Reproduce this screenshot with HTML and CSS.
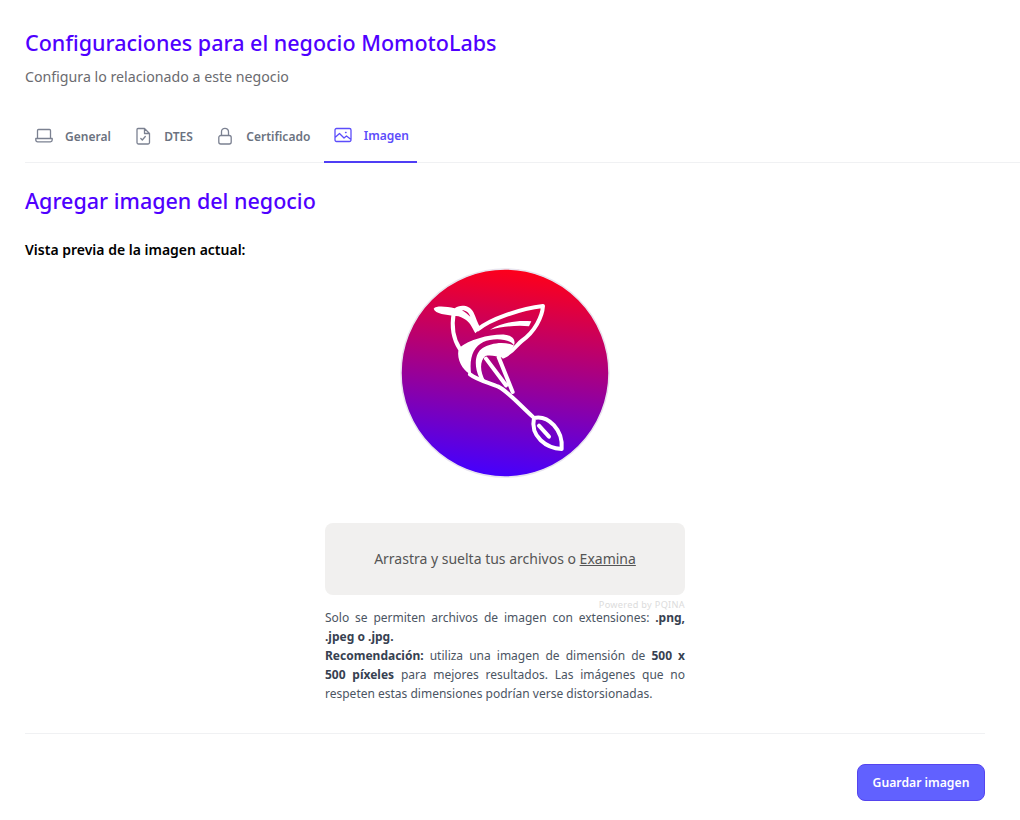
FILE: index.html
```html
<!DOCTYPE html>
<html lang="es">
<head>
  <meta charset="UTF-8">
  <title>Configuraciones del negocio</title>
  <link rel="stylesheet" href="styles.css">
</head>
<body>
  <header class="page-head">
    <h1 class="title">Configuraciones para el negocio MomotoLabs</h1>
    <p class="subtitle">Configura lo relacionado a este negocio</p>
  </header>

  <nav class="tabs">
    <a class="tab">
      <svg class="tab-icon" viewBox="0 0 18 18"><path d="M2.500 11.500V3.500a1 1 0 0 1 1-1h11a1 1 0 0 1 1 1v8M.8 11.500h16.400v1.500a1.800 1.800 0 0 1-1.800 1.800H2.600A1.800 1.800 0 0 1 .8 13z"/></svg>
      General
    </a>
    <a class="tab">
      <svg class="tab-icon" viewBox="0 0 18 18"><path d="M3 2.500a1 1 0 0 1 1-1h6.500L15.500 6.500v9a1.500 1.500 0 0 1-1.500 1.500H4.500A1.500 1.500 0 0 1 3 15.500zM10.500 1.500v5h5M6.800 11.500l1.500 1.500 3-3.500"/></svg>
      DTES
    </a>
    <a class="tab">
      <svg class="tab-icon" viewBox="0 0 18 18"><path d="M5.500 8.500V4.800a3.500 3.500 0 0 1 7 0v3.700M4.800 8.500h8.400a2 2 0 0 1 2 2v4.500a2 2 0 0 1-2 2H4.800a2 2 0 0 1-2-2v-4.500a2 2 0 0 1 2-2z"/></svg>
      Certificado
    </a>
    <a class="tab tab-active">
      <svg class="tab-icon" viewBox="0 0 18 18"><path d="M2.500 2.500h13A1.500 1.500 0 0 1 17 4v10a1.500 1.500 0 0 1-1.500 1.500h-13A1.500 1.500 0 0 1 1 14V4a1.500 1.500 0 0 1 1.500-1.500zM1 11.500l4.500-4 4.500 4.500 2.500-2 4.500 3.500M11.500 6.500h.6"/></svg>
      Imagen
    </a>
  </nav>

  <main class="content">
    <h2 class="section-title">Agregar imagen del negocio</h2>
    <p class="preview-label">Vista previa de la imagen actual:</p>

    <div class="preview">
      <svg class="logo" viewBox="0 0 210 210">
        <defs>
          <linearGradient id="logo-bg" x1="0.560" y1="0" x2="0.440" y2="1">
            <stop offset="0" stop-color="#ff0019"/>
            <stop offset="1" stop-color="#4400ff"/>
          </linearGradient>
        </defs>
        <circle cx="105" cy="105" r="104" fill="url(#logo-bg)" stroke="#e8e4ee" stroke-width="1.500"/>
        <g transform="translate(-10 -8) scale(.3333)">
          <!-- head and beak -->
          <path class="bird-fill" d="M131 146C140 136 170 140 194 145C208 133 238 133 250 156C258 172 262 190 272 204L256 220C245 200 240 186 222 176C210 168 200 168 192 168C170 164 135 162 131 146Z"/>
          <path class="bird-eye" d="M216 151C228 151 237 158 241 170C233 163 226 157 216 151Z"/>
          <path class="bird-line" d="M191 160C185 195 189 235 209 266"/>
          <!-- wing -->
          <path class="bird-line" d="M264 208C300 178 390 146 459 138C457 170 435 215 395 243C378 255 372 275 340 289"/>
          <path class="bird-fill" d="M300 209C340 186 385 180 424 184L417 199C385 195 340 199 300 209Z"/>
          <!-- body -->
          <path class="bird-fill" d="M207 264C240 238 300 222 345 224C368 226 378 240 372 256C360 236 310 232 280 246C250 260 236 295 244 345C222 335 196 300 207 264Z"/>
          <path class="bird-fill" d="M370 256C340 242 300 250 278 264C256 278 250 315 268 354L286 364C270 335 268 305 286 288C305 284 320 290 335 292C355 285 365 270 372 256Z"/>
          <!-- tail -->
          <path class="bird-line" d="M240 343C265 362 300 368 325 380C350 392 380 425 428 470"/>
          <path class="bird-line" d="M288 296L348 376M326 292L368 396"/>
          <path class="bird-line" d="M432 474C475 465 520 510 515 567C470 565 420 530 432 474ZM447 497L477 530"/>
        </g>
      </svg>
    </div>

    <div class="upload">
      <div class="dropzone">
        <span>Arrastra y suelta tus archivos o <u>Examina</u></span>
      </div>
      <p class="credit">Powered by PQINA</p>
      <p class="hint">
        Solo se permiten archivos de imagen con extensiones: <b>.png, .jpeg o .jpg.</b><br>
        <b>Recomendación:</b> utiliza una imagen de dimensión de <b>500 x 500 píxeles</b> para mejores resultados. Las imágenes que no respeten estas dimensiones podrían verse distorsionadas.
      </p>
    </div>

    <hr class="divider">

    <div class="actions">
      <button type="button" class="btn-save">Guardar imagen</button>
    </div>
  </main>
</body>
</html>
```

FILE: styles.css
```css
* {
  box-sizing: border-box;
}

body {
  margin: 0;
  font-family: "Noto Sans", "Open Sans", sans-serif;
  color: #111;
  background-color: #fff;
}

.page-head {
  padding: 28px 25px 0;
}

.title {
  margin: 0;
  font-size: 21.500px;
  line-height: 29px;
  font-weight: 500;
  color: #4f00ff;
}

.subtitle {
  margin: 10px 0 0;
  font-size: 14.200px;
  line-height: 20px;
  color: #6b6b70;
}

.tabs {
  display: flex;
  gap: 3.500px;
  margin: 28px 0 0 25px;
  height: 48px;
  border-bottom: 1px solid #f0f1f3;
}

.tab {
  display: flex;
  align-items: center;
  gap: 12px;
  height: 48px;
  padding: 0 10px 6px;
  font-size: 12px;
  font-weight: 600;
  color: #6b7280;
}

.tab-icon {
  width: 18px;
  height: 18px;
  fill: none;
  stroke: #7b8191;
  stroke-width: 1.300;
  stroke-linecap: round;
  stroke-linejoin: round;
}

.tab-active {
  padding-right: 8px;
  color: #5c4dfb;
  border-bottom: 2px solid #4f3df5;
}

.tab-active .tab-icon {
  stroke: #5c4dfb;
}

.content {
  padding: 22px 35px 0 25px;
}

.section-title {
  margin: 0;
  font-size: 21.500px;
  line-height: 31px;
  font-weight: 500;
  color: #4f00ff;
}

.preview-label {
  margin: 24px 0 0;
  font-size: 14px;
  line-height: 20px;
  font-weight: 600;
  color: #000;
}

.preview {
  display: flex;
  justify-content: center;
  margin-top: 8px;
}

.logo {
  display: block;
  width: 210px;
  height: 210px;
}

.bird-fill {
  fill: #fff;
}

.bird-eye {
  fill: #c9005c;
}

.bird-line {
  fill: none;
  stroke: #fff;
  stroke-width: 12;
  stroke-linecap: round;
  stroke-linejoin: round;
}

.upload {
  width: 360px;
  margin: 45px auto 0;
}

.dropzone {
  display: flex;
  align-items: center;
  justify-content: center;
  height: 72px;
  padding-bottom: 2px;
  border-radius: 8px;
  background-color: #f1f0ef;
  font-size: 14px;
  color: #555;
}

.credit {
  margin: 6px 0 0;
  text-align: right;
  font-size: 9.200px;
  line-height: 7px;
  letter-spacing: .3px;
  color: #dcdcdc;
}

.hint {
  margin: 0;
  font-size: 12px;
  line-height: 19px;
  text-align: justify;
  color: #4b5563;
}

.hint b {
  color: #374151;
}

.divider {
  margin: 30px 0 0;
  border: 0;
  border-top: 1px solid #f0f1f3;
}

.actions {
  display: flex;
  justify-content: flex-end;
  margin-top: 30px;
}

.btn-save {
  width: 128px;
  height: 37px;
  border: 1px solid #5544ee;
  border-radius: 8px;
  background-color: #6161ff;
  color: #fff;
  font-family: inherit;
  font-size: 12.200px;
  font-weight: 600;
  cursor: pointer;
}
```
